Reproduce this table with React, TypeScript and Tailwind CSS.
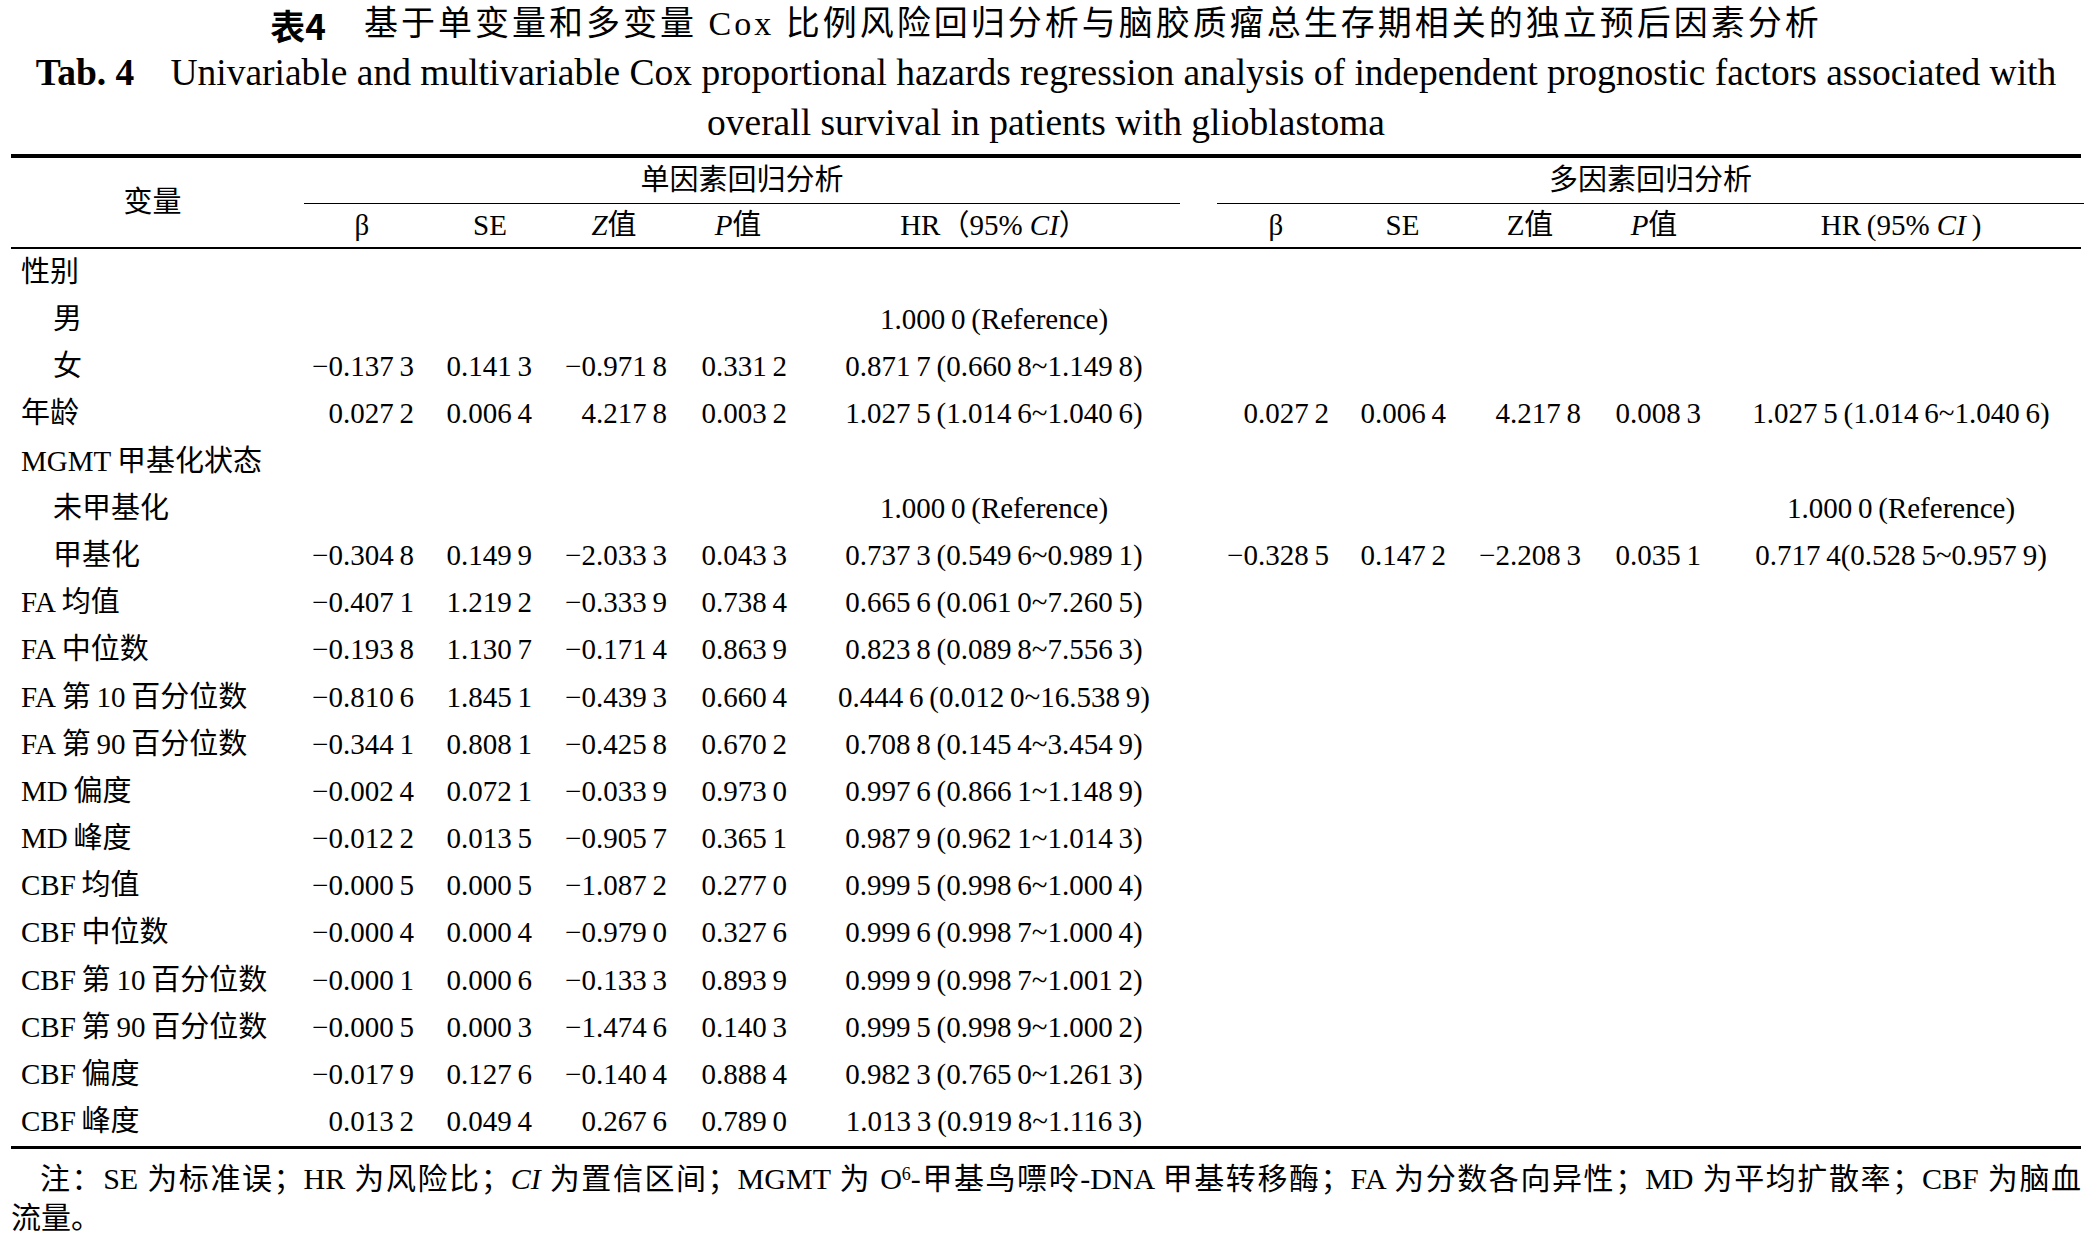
import React from "react";

type Row = {
  label: string;
  indent?: boolean;
  uni?: string[];
  multi?: string[];
};

const REF = "1.000 0 (Reference)";

const rows: Row[] = [
  { label: "性别" },
  { label: "男", indent: true, uni: ["", "", "", "", REF] },
  { label: "女", indent: true, uni: ["−0.137 3", "0.141 3", "−0.971 8", "0.331 2", "0.871 7 (0.660 8~1.149 8)"] },
  {
    label: "年龄",
    uni: ["0.027 2", "0.006 4", "4.217 8", "0.003 2", "1.027 5 (1.014 6~1.040 6)"],
    multi: ["0.027 2", "0.006 4", "4.217 8", "0.008 3", "1.027 5 (1.014 6~1.040 6)"],
  },
  { label: "MGMT 甲基化状态" },
  { label: "未甲基化", indent: true, uni: ["", "", "", "", REF], multi: ["", "", "", "", REF] },
  {
    label: "甲基化",
    indent: true,
    uni: ["−0.304 8", "0.149 9", "−2.033 3", "0.043 3", "0.737 3 (0.549 6~0.989 1)"],
    multi: ["−0.328 5", "0.147 2", "−2.208 3", "0.035 1", "0.717 4(0.528 5~0.957 9)"],
  },
  { label: "FA 均值", uni: ["−0.407 1", "1.219 2", "−0.333 9", "0.738 4", "0.665 6 (0.061 0~7.260 5)"] },
  { label: "FA 中位数", uni: ["−0.193 8", "1.130 7", "−0.171 4", "0.863 9", "0.823 8 (0.089 8~7.556 3)"] },
  { label: "FA 第 10 百分位数", uni: ["−0.810 6", "1.845 1", "−0.439 3", "0.660 4", "0.444 6 (0.012 0~16.538 9)"] },
  { label: "FA 第 90 百分位数", uni: ["−0.344 1", "0.808 1", "−0.425 8", "0.670 2", "0.708 8 (0.145 4~3.454 9)"] },
  { label: "MD 偏度", uni: ["−0.002 4", "0.072 1", "−0.033 9", "0.973 0", "0.997 6 (0.866 1~1.148 9)"] },
  { label: "MD 峰度", uni: ["−0.012 2", "0.013 5", "−0.905 7", "0.365 1", "0.987 9 (0.962 1~1.014 3)"] },
  { label: "CBF 均值", uni: ["−0.000 5", "0.000 5", "−1.087 2", "0.277 0", "0.999 5 (0.998 6~1.000 4)"] },
  { label: "CBF 中位数", uni: ["−0.000 4", "0.000 4", "−0.979 0", "0.327 6", "0.999 6 (0.998 7~1.000 4)"] },
  { label: "CBF 第 10 百分位数", uni: ["−0.000 1", "0.000 6", "−0.133 3", "0.893 9", "0.999 9 (0.998 7~1.001 2)"] },
  { label: "CBF 第 90 百分位数", uni: ["−0.000 5", "0.000 3", "−1.474 6", "0.140 3", "0.999 5 (0.998 9~1.000 2)"] },
  { label: "CBF 偏度", uni: ["−0.017 9", "0.127 6", "−0.140 4", "0.888 4", "0.982 3 (0.765 0~1.261 3)"] },
  { label: "CBF 峰度", uni: ["0.013 2", "0.049 4", "0.267 6", "0.789 0", "1.013 3 (0.919 8~1.116 3)"] },
];

// 数字の桁区切り・ラベル内の区切りは細いスペース
const thin = (s: string) => s.replace(/ /g, "\u2009");

const gridCls =
  "grid grid-cols-[293px_116px_140px_108px_140px_372px_37px_118px_135px_120px_128px_366px]";

// 右寄せ列の右余白（単因素 / 多因素）
const uniPad = ["pr-[6px]", "pr-[28px]", "pr-[1px]", "pr-[21px]"];
const multiPad = ["pr-[6px]", "pr-[24px]", "pr-[9px]", "pr-[17px]"];

function Cells({ vals, pads }: { vals?: string[]; pads: string[] }) {
  const v = vals ?? ["", "", "", "", ""];
  return (
    <>
      {v.slice(0, 4).map((x, i) => (
        <div key={i} className={`flex items-center justify-end whitespace-nowrap ${pads[i]}`}>
          {thin(x)}
        </div>
      ))}
      <div className="flex items-center justify-center whitespace-nowrap">{thin(v[4])}</div>
    </>
  );
}

export default function App() {
  return (
    <div
      className="w-[2092px] min-h-[1238px] bg-white text-black"
      style={{ fontFamily: '"Liberation Serif", "Noto Sans CJK SC", serif' }}
    >
      {/* タイトル */}
      <div className="h-[48px] flex items-center justify-center text-[34px] leading-none">
        <span className="font-bold text-[35px]" style={{ fontFamily: '"Noto Sans CJK SC", sans-serif' }}>
          表4
        </span>
        <span className="ml-[38px] tracking-[3px]">
          基于单变量和多变量 Cox 比例风险回归分析与脑胶质瘤总生存期相关的独立预后因素分析
        </span>
      </div>
      <div className="text-center text-[37.5px] leading-[50px]">
        <span className="font-bold">Tab. 4</span>
        <span className="ml-[36px]">
          Univariable and multivariable Cox proportional hazards regression analysis of independent prognostic factors associated with
        </span>
        <br />
        overall survival in patients with glioblastoma
      </div>

      {/* 表 */}
      <div className="mx-[11px] mt-[6px] text-[29px]">
        <div className="border-t-4 border-black">
          <div className={`${gridCls} grid-rows-[46px_43px]`}>
            <div className="row-span-2 flex items-center justify-center pr-[10px]">变量</div>
            <div className="col-span-5 flex items-center justify-center border-b-[1.5px] border-black">
              单因素回归分析
            </div>
            <div />
            <div className="col-span-5 flex items-center justify-center border-b-[1.5px] border-black">
              多因素回归分析
            </div>

            <div className="flex items-center justify-center">β</div>
            <div className="flex items-center justify-center">SE</div>
            <div className="flex items-center justify-center">
              <i>Z</i>值
            </div>
            <div className="flex items-center justify-center">
              <i>P</i>值
            </div>
            <div className="flex items-center justify-center whitespace-nowrap">
              HR（95%&nbsp;<i>CI</i>）
            </div>
            <div />
            <div className="flex items-center justify-center">β</div>
            <div className="flex items-center justify-center">SE</div>
            <div className="flex items-center justify-center">Z值</div>
            <div className="flex items-center justify-center">
              <i>P</i>值
            </div>
            <div className="flex items-center justify-center whitespace-nowrap">
              HR&#8201;(95%&nbsp;<i>CI</i>&#8201;)
            </div>
          </div>
        </div>

        <div className="border-t-2 border-black border-b-[3px]">
          {rows.map((r) => (
            <div key={r.label} className={`${gridCls} h-[47.2px]`}>
              <div className={`flex items-center whitespace-nowrap ${r.indent ? "pl-[42px]" : "pl-[10px]"}`}>
                {thin(r.label)}
              </div>
              <Cells vals={r.uni} pads={uniPad} />
              <div />
              <Cells vals={r.multi} pads={multiPad} />
            </div>
          ))}
        </div>

        {/* 注 */}
        <div className="mt-[10px] text-[30px] leading-[39px]">
          <p className="indent-[29px] text-justify [text-align-last:justify]">
            注：SE 为标准误；HR 为风险比；<i>CI</i> 为置信区间；MGMT 为 O<sup className="text-[18px]">6</sup>-甲基鸟嘌呤-DNA
            甲基转移酶；FA 为分数各向异性；MD 为平均扩散率；CBF 为脑血
          </p>
          <p>流量。</p>
        </div>
      </div>
    </div>
  );
}
